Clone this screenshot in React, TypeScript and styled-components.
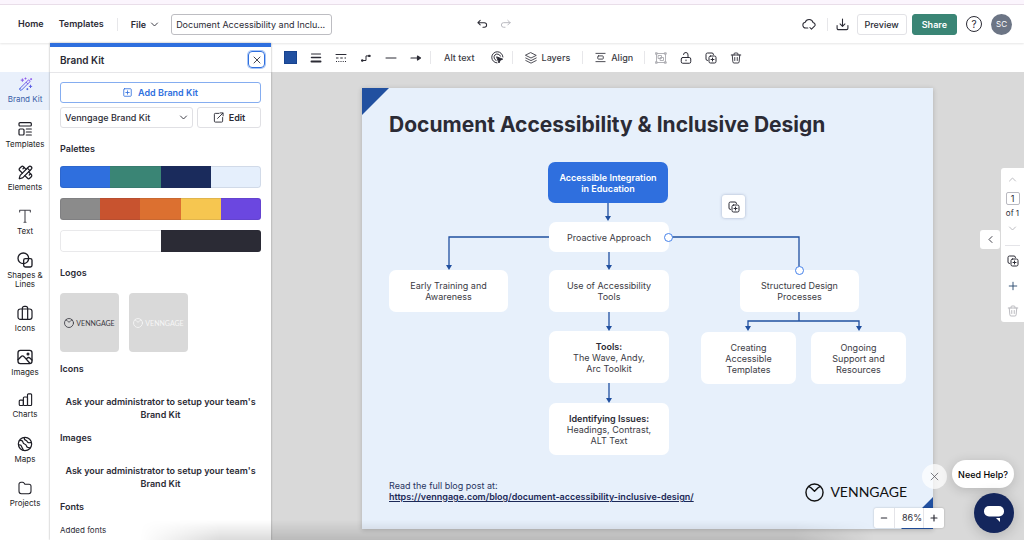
import React from "react";
import styled, { createGlobalStyle, css } from "styled-components";
import { PencilRuler } from "lucide-react";

const ink = "#2b2b35";
const blue = "#2f6fde";
const deep = "#2150a0";

const Global = createGlobalStyle`
  *, *::before, *::after { box-sizing: border-box; }
  body { margin: 0; background: #fff; color: ${ink}; font-family: Inter, "Liberation Sans", sans-serif; font-size: 9px; }
  button, input, select { font: inherit; color: inherit; margin: 0; padding: 0; }
  button { background: none; border: 0; cursor: pointer; }
  a { color: inherit; text-decoration: none; }
  h1, h2, h3, p { margin: 0; }
`;

const Shell = styled.div`
  height: 100vh;
  min-height: 540px;
  display: flex;
  flex-direction: column;
  overflow: hidden;
  position: relative;
`;

const Strip = styled.div`
  flex: none;
  height: 5px;
  background: #fbf5fd;
  border-bottom: 1px solid #eadfea;
`;

const Header = styled.header`
  flex: none;
  height: 38px;
  padding: 0 12px 0 18px;
  display: flex;
  align-items: center;
  background: #fff;
  box-shadow: 0 1px 2px rgba(0, 0, 0, 0.1);
  position: relative;
  z-index: 2;
`;

const Group = styled.div<{ $gap?: number; $start?: number; $push?: boolean }>`
  display: flex;
  align-items: center;
  gap: ${(p) => p.$gap ?? 0}px;
  margin-left: ${(p) => (p.$push ? "auto" : `${p.$start ?? 0}px`)};
`;

const NavLink = styled.a`
  font-weight: 600;
  line-height: 12px;
`;

const Rule = styled.span<{ $space?: number }>`
  width: 1px;
  height: 13px;
  background: #e7e7ea;
  margin: 0 ${(p) => p.$space ?? 0}px;
`;

const FileButton = styled.button`
  display: flex;
  align-items: center;
  gap: 4px;
  font-weight: 600;
`;

const TitleInput = styled.input`
  width: 161px;
  height: 21px;
  padding: 0 4px;
  border: 1px solid #bdbdc2;
  border-radius: 3px;
  background: #fff;
`;

const IconButton = styled.button<{ $size?: number; $tone?: string }>`
  flex: none;
  width: ${(p) => p.$size ?? 23}px;
  height: ${(p) => p.$size ?? 23}px;
  display: grid;
  place-items: center;
  color: ${(p) => p.$tone ?? ink};
`;

const TextButton = styled.button<{ $solid?: boolean }>`
  height: 21px;
  padding: 0 7px;
  font-weight: 500;
  border: 1px solid #e2e2e6;
  border-radius: 3px;
  background: #fff;
  ${(p) =>
    p.$solid &&
    css`
      padding: 0 9px;
      font-weight: 600;
      color: #fff;
      background: #3a8575;
      border-color: #3a8575;
    `}
`;

const Round = styled.button<{ $size: number; $filled?: boolean }>`
  width: ${(p) => p.$size}px;
  height: ${(p) => p.$size}px;
  border-radius: 50%;
  font-size: ${(p) => (p.$filled ? 8 : 10)}px;
  border: ${(p) => (p.$filled ? "0" : `1px solid ${ink}`)};
  background: ${(p) => (p.$filled ? "#6c7585" : "#fff")};
  color: ${(p) => (p.$filled ? "#fff" : ink)};
`;

const Body = styled.div`
  flex: 1;
  min-height: 0;
  display: grid;
  grid-template-columns: 50px 221px minmax(0, 1fr);
`;

const Rail = styled.nav`
  padding: 29px 0 27px;
  display: flex;
  flex-direction: column;
  justify-content: space-between;
`;

const RailItem = styled.a<{ $active?: boolean }>`
  min-height: 38px;
  padding: 5px 0;
  display: flex;
  flex-direction: column;
  align-items: center;
  gap: 3px;
  font-size: 8px;
  line-height: 9px;
  text-align: center;
  white-space: pre-line;
  color: ${(p) => (p.$active ? "#3a5fa8" : "#1d1d25")};
  background: ${(p) => (p.$active ? "#e9f0fb" : "transparent")};
`;

const Panel = styled.aside`
  border-top: 4px solid ${blue};
  overflow: hidden;
  position: relative;
  z-index: 3;
  background: #fff;
  box-shadow: 0 0 2px rgba(0, 0, 0, 0.35);
`;

const PanelHead = styled.div`
  height: 26px;
  padding: 0 6px 0 10px;
  display: flex;
  align-items: center;
  justify-content: space-between;
  border-bottom: 1px solid #e6e6e9;
`;

const PanelTitle = styled.h2`
  font-size: 10px;
  line-height: 14px;
  font-weight: 600;
`;

const CloseButton = styled.button`
  width: 17px;
  height: 17px;
  display: grid;
  place-items: center;
  border: 1px solid ${blue};
  border-radius: 4px;
  box-shadow: 0 0 0 1px #a9c6f6;
`;

const PanelBody = styled.div`
  padding: 9px 10px;
`;

const AddButton = styled.button`
  width: 100%;
  height: 21px;
  display: flex;
  align-items: center;
  justify-content: center;
  gap: 6px;
  color: ${blue};
  font-weight: 600;
  border: 1px solid #85adf0;
  border-radius: 3px;
`;

const KitRow = styled.div`
  display: flex;
  gap: 4px;
  margin-top: 4px;
`;

const SelectBox = styled.label`
  flex: 1;
  display: flex;
  align-items: center;
  height: 21px;
  padding-right: 4px;
  border: 1px solid #e0e0e4;
  border-radius: 3px;
`;

const KitSelect = styled.select`
  flex: 1;
  min-width: 0;
  height: 19px;
  padding-left: 4px;
  appearance: none;
  border: 0;
  background: transparent;
  font-weight: 500;
`;

const EditButton = styled.button`
  width: 64px;
  height: 21px;
  display: flex;
  align-items: center;
  justify-content: center;
  gap: 5px;
  font-weight: 600;
  border: 1px solid #e0e0e4;
  border-radius: 3px;
`;

const SectionTitle = styled.h3<{ $top: number }>`
  margin-top: ${(p) => p.$top}px;
  font-size: 9px;
  line-height: 12px;
  font-weight: 600;
`;

const Palettes = styled.div`
  margin-top: 11px;
  display: grid;
  gap: 10px;
`;

const Palette = styled.div`
  height: 22px;
  display: flex;
  border-radius: 3px;
  overflow: hidden;
  position: relative;

  &::after {
    content: "";
    position: absolute;
    inset: 0;
    border: 1px solid rgba(40, 40, 60, 0.1);
    border-radius: 3px;
  }
`;

const Swatch = styled.span<{ $color: string }>`
  flex: 1;
  background: ${(p) => p.$color};
`;

const LogoRow = styled.div`
  margin-top: 14px;
  display: flex;
  gap: 10px;
`;

const LogoCard = styled.button<{ $tone: string }>`
  width: 59px;
  height: 59px;
  display: flex;
  align-items: center;
  justify-content: center;
  gap: 2px;
  border-radius: 4px;
  background: #d9d9d9;
  color: ${(p) => p.$tone};
  font-family: Lato, sans-serif;
  font-size: 7px;
`;

const Notice = styled.p`
  margin-top: 20px;
  font-weight: 600;
  line-height: 13px;
  text-align: center;
`;

const Small = styled.p`
  margin-top: 11px;
  font-size: 8px;
  line-height: 12px;
`;

const Main = styled.main`
  min-width: 0;
  display: flex;
  flex-direction: column;
`;

const Toolbar = styled.div`
  flex: none;
  height: 29px;
  padding-left: 7px;
  display: flex;
  align-items: center;
  color: #3c3c45;
`;

const ColorChip = styled.button`
  width: 13px;
  height: 13px;
  margin: 0 6px;
  background: ${deep};
  border: 1px solid #17438f;
`;

const ToolText = styled.button`
  display: flex;
  align-items: center;
  gap: 5px;
  font-weight: 500;
`;

const Stage = styled.div`
  flex: 1;
  min-height: 0;
  padding-top: 16px;
  background: #d9d9d9;
  position: relative;
`;

const Page = styled.article`
  position: relative;
  width: 571px;
  height: 441px;
  margin: 0 auto;
  background: #e7f0fb;
  box-shadow: 0 1px 5px rgba(0, 0, 0, 0.2);
`;

const PageTitle = styled.h1`
  padding: 23px 0 0 27px;
  font-size: 21px;
  line-height: 28px;
  font-weight: 700;
  white-space: nowrap;
`;

const Drawing = styled.svg`
  position: absolute;
  inset: 0;
`;

const Node = styled.div<{ $x: number; $y: number; $w: number; $h: number; $root?: boolean }>`
  position: absolute;
  left: ${(p) => p.$x}px;
  top: ${(p) => p.$y}px;
  width: ${(p) => p.$w}px;
  height: ${(p) => p.$h}px;
  display: flex;
  flex-direction: column;
  align-items: center;
  justify-content: center;
  border-radius: 7px;
  background: ${(p) => (p.$root ? blue : "#fff")};
  color: ${(p) => (p.$root ? "#fff" : "#3b3b44")};
  font-weight: ${(p) => (p.$root ? 600 : 400)};
  line-height: 11px;
  white-space: nowrap;
`;

const Strong = styled.strong`
  font-weight: 600;
  color: ${ink};
`;

const Handle = styled.span<{ $x: number; $y: number }>`
  position: absolute;
  left: ${(p) => p.$x - 4}px;
  top: ${(p) => p.$y - 4}px;
  width: 9px;
  height: 9px;
  border: 1px solid #4682ea;
  border-radius: 50%;
  background: #fff;
`;

const FloatButton = styled.button`
  position: absolute;
  left: 360px;
  top: 107px;
  width: 23px;
  height: 23px;
  display: grid;
  place-items: center;
  border-radius: 3px;
  background: #fff;
  box-shadow: 0 0 3px rgba(40, 60, 110, 0.35);
`;

const PageFoot = styled.footer`
  position: absolute;
  left: 27px;
  right: 26px;
  bottom: 27px;
  display: flex;
  align-items: flex-end;
  justify-content: space-between;
  line-height: 11px;
  color: #27345f;
`;

const BlogLink = styled.a`
  font-weight: 600;
  text-decoration: underline;
  color: #1c2957;
`;

const Brand = styled.div`
  display: flex;
  align-items: center;
  gap: 6px;
  color: #111;
  font-family: Lato, sans-serif;
  font-size: 14px;
  line-height: 20px;
`;

const Pager = styled.div`
  position: absolute;
  top: 96px;
  right: 0;
  width: 23px;
  height: 154px;
  padding: 5px 4px;
  display: flex;
  flex-direction: column;
  align-items: center;
  border-radius: 3px 0 0 3px;
  background: #fff;
  font-size: 8px;
  line-height: 11px;
`;

const PageInput = styled.input`
  width: 14px;
  height: 14px;
  margin: 6px 0 3px;
  border: 1px solid #b9b9c0;
  border-radius: 2px;
  font-size: 9px;
  text-align: center;
`;

const PagerRule = styled.span`
  width: 15px;
  height: 1px;
  margin: 8px 0 2px;
  flex: none;
  background: #e4e4e8;
`;

const PagerTab = styled.button`
  position: absolute;
  top: 158px;
  right: 24px;
  width: 20px;
  height: 19px;
  display: grid;
  place-items: center;
  border-radius: 3px;
  background: #fff;
`;

const ZoomBar = styled.div`
  position: absolute;
  right: 80px;
  bottom: 12px;
  height: 20px;
  display: grid;
  grid-template-columns: 20px 30px 20px;
  align-items: center;
  border-radius: 2px;
  background: #fff;
  box-shadow: 0 0 2px rgba(0, 0, 0, 0.25);
  font-size: 9px;
`;

const ZoomButton = styled.button`
  height: 20px;
  display: grid;
  place-items: center;
`;

const ZoomValue = styled.output`
  height: 20px;
  padding-right: 1px;
  line-height: 20px;
  text-align: right;
  border: solid #e4e4e8;
  border-width: 0 1px;
`;

const HelpDismiss = styled.button`
  position: absolute;
  right: 77px;
  bottom: 51px;
  width: 25px;
  height: 25px;
  display: grid;
  place-items: center;
  border-radius: 50%;
  color: #55555e;
  background: rgba(255, 255, 255, 0.72);
`;

const HelpPill = styled.button`
  position: absolute;
  right: 10px;
  bottom: 52px;
  height: 28px;
  padding: 0 6px;
  border-radius: 14px;
  background: #fff;
  color: #000;
  font-weight: 500;
  box-shadow: 0 2px 12px rgba(0, 0, 0, 0.16);
`;

const ChatButton = styled.button`
  position: absolute;
  right: 10px;
  bottom: 7px;
  width: 40px;
  height: 40px;
  display: grid;
  place-items: center;
  border-radius: 50%;
  background: #14265c;
  box-shadow: 0 2px 14px rgba(0, 0, 0, 0.2);
`;

const DockShade = styled.div`
  position: absolute;
  left: 140px;
  right: 150px;
  bottom: 0;
  height: 20px;
  z-index: 5;
  pointer-events: none;
  background: linear-gradient(to bottom, rgba(0, 0, 0, 0), rgba(0, 0, 0, 0.14));
  mask-image: linear-gradient(to right, transparent, #000 80px, #000 calc(100% - 80px), transparent);
`;

type IconProps = { size?: number; width?: number; stroke?: string; children: React.ReactNode };
const Icon = ({ size = 13, width = 1.7, stroke = "currentColor", children }: IconProps) => (
  <svg
    width={size}
    height={size}
    viewBox="0 0 24 24"
    fill="none"
    stroke={stroke}
    strokeWidth={width}
    strokeLinecap="round"
    strokeLinejoin="round"
    aria-hidden="true"
  >
    {children}
  </svg>
);

const Chevron = ({ d, size = 9, width = 2.4 }: { d: string; size?: number; width?: number }) => (
  <Icon size={size} width={width}>
    <path d={d} />
  </Icon>
);
const DOWN = "M4 8l8 8 8-8";
const UP = "M4 16l8-8 8 8";
const LEFT = "M16 4l-8 8 8 8";

const Cross = ({ size = 8, width = 2.6 }: { size?: number; width?: number }) => (
  <Icon size={size} width={width}>
    <path d="M3 3l18 18M21 3L3 21" />
  </Icon>
);

const Duplicate = ({ size = 13 }: { size?: number }) => (
  <Icon size={size} width={2}>
    <rect x="8" y="8" width="14" height="14" rx="3" />
    <path d="M5 17a3 3 0 0 1-3-3V5a3 3 0 0 1 3-3h9a3 3 0 0 1 3 3M15 12v6M12 15h6" />
  </Icon>
);

const Trash = () => (
  <Icon size={12} width={1.8}>
    <path d="M2.500 6h19M8 6V4a2 2 0 0 1 2-2h4a2 2 0 0 1 2 2v2M4.500 6l1.200 13.500A2.500 2.500 0 0 0 8.200 22h7.600a2.500 2.500 0 0 0 2.500-2.500L19.500 6M9.500 11v6M14.500 11v6" />
  </Icon>
);

const VennMark = ({ size, width }: { size: number; width: number }) => (
  <Icon size={size} width={width}>
    <circle cx="12" cy="12" r="10.800" />
    <path d="M5 4.500l2.500 1.500L12 10.500 16.500 6 19 4.500" />
  </Icon>
);

const railItems: { label: string; icon: React.ReactNode }[] = [
  {
    label: "Brand Kit",
    icon: (
      <Icon size={15} stroke="url(#wand)" width={1.6}>
        <defs>
          <linearGradient id="wand" x1="0" y1="0" x2="0" y2="24" gradientUnits="userSpaceOnUse">
            <stop offset="0" stopColor="#9a58ee" />
            <stop offset="1" stopColor="#3a67e0" />
          </linearGradient>
        </defs>
        <path d="M3.200 18.200L16 5.400a1.800 1.800 0 0 1 2.600 2.600L5.800 20.800a1.800 1.800 0 0 1-2.600-2.600zM13 8.400l2.600 2.600M7 3v4M5 5h4M20 13v4M18 15h4M12 1.500v1.800M11.100 2.400h1.800M21 2.500v1.800M20.100 3.400h1.800M15 18.500v1.800M14.100 19.400h1.800" />
      </Icon>
    ),
  },
  {
    label: "Templates",
    icon: (
      <Icon size={16} width={1.8}>
        <rect x="3" y="2.500" width="18.500" height="5" rx="1.500" />
        <rect x="3" y="12" width="7.500" height="9" rx="1.500" />
        <path d="M14 12h7.500M14 16.500h7.500M14 21h7.500" />
      </Icon>
    ),
  },
  { label: "Elements", icon: <PencilRuler size={15} strokeWidth={2} aria-hidden="true" /> },
  {
    label: "Text",
    icon: (
      <Icon size={16} width={1.6} stroke="#44444c">
        <path d="M4 6V3.500h16V6M12 3.500v18M10.500 21.500h3" />
      </Icon>
    ),
  },
  {
    label: "Shapes &\nLines",
    icon: (
      <Icon size={16} width={2}>
        <circle cx="9.500" cy="9.500" r="8" />
        <rect x="10" y="10" width="12.500" height="12.500" rx="2.500" />
      </Icon>
    ),
  },
  {
    label: "Icons",
    icon: (
      <Icon size={16} width={1.8}>
        <rect x="1.500" y="6" width="21" height="15.500" rx="3.500" />
        <path d="M8 21.500V5a3 3 0 0 1 3-3h2a3 3 0 0 1 3 3v16.500" />
      </Icon>
    ),
  },
  {
    label: "Images",
    icon: (
      <Icon size={16} width={2}>
        <rect x="1.500" y="2" width="21" height="20" rx="3.500" />
        <path d="M1.500 16l4.500-4.500c1.500-1.500 3-1.500 4.500 0L19 21M14 15l1.500-1.500c1.200-1 2.500-1 3.700 0l3.300 3" />
        <circle cx="16.500" cy="7.500" r="1.300" />
      </Icon>
    ),
  },
  {
    label: "Charts",
    icon: (
      <Icon size={15} width={1.8}>
        <rect x="2" y="13" width="6.600" height="8.500" rx="1.500" />
        <rect x="8.600" y="8" width="6.600" height="13.500" rx="1.500" />
        <rect x="15.200" y="3" width="6.600" height="18.500" rx="1.500" />
      </Icon>
    ),
  },
  {
    label: "Maps",
    icon: (
      <Icon size={16} width={1.8}>
        <circle cx="12" cy="12" r="10" />
        <path d="M3.500 7c3-1 5 0 5.500 2.500s2.500 2 4 3.500 1 3 2.500 4 3 0 4 1M2.500 13.500c2.500-.5 4 .5 4.500 2.500s2 2.500 2.500 5.500M11 2.500c-.5 2.500.5 3.500 2.500 4s1.500 3 3.500 3.500 3-.5 4.500 0" />
      </Icon>
    ),
  },
  {
    label: "Projects",
    icon: (
      <Icon size={16} width={1.6}>
        <path d="M3 6.500a3 3 0 0 1 3-3h2.400a3 3 0 0 1 2.100 1L12 6.500h6a3 3 0 0 1 3 3v7.500a3.500 3.500 0 0 1-3.500 3.500h-11A3.500 3.500 0 0 1 3 17z" />
      </Icon>
    ),
  },
];

const palettes = [
  ["#2f6fde", "#3a8575", "#1a2b5c", "#e5effc"],
  ["#8b8b8b", "#c8532f", "#dc7030", "#f6c650", "#6b47e0"],
  ["#ffffff", "#2b2b35"],
];

const nodes = [
  { x: 186, y: 74, w: 120, h: 41, root: true, lines: ["Accessible Integration", "in Education"] },
  { x: 187, y: 134, w: 120, h: 30, lines: ["Proactive Approach"] },
  { x: 27, y: 182, w: 119, h: 42, lines: ["Early Training and", "Awareness"] },
  { x: 187, y: 182, w: 120, h: 42, lines: ["Use of Accessibility", "Tools"] },
  { x: 378, y: 182, w: 119, h: 42, lines: ["Structured Design", "Processes"] },
  { x: 187, y: 243, w: 120, h: 52, head: "Tools:", lines: ["The Wave, Andy,", "Arc Toolkit"] },
  { x: 187, y: 315, w: 120, h: 52, head: "Identifying Issues:", lines: ["Headings, Contrast,", "ALT Text"] },
  { x: 339, y: 244, w: 95, h: 52, lines: ["Creating", "Accessible", "Templates"] },
  { x: 449, y: 244, w: 95, h: 52, lines: ["Ongoing", "Support and", "Resources"] },
];

const arrowTips: [number, number][] = [
  [246, 133],
  [87, 182],
  [247, 182],
  [247, 243],
  [247, 315],
  [386, 243],
  [497, 243],
];

const App = () => (
  <>
    <Global />
    <Shell>
      <Strip />
      <Header>
        <Group $gap={15}>
          <NavLink href="#home">Home</NavLink>
          <NavLink href="#templates">Templates</NavLink>
        </Group>
        <Rule $space={13} />
        <FileButton>
          File
          <Chevron d={DOWN} />
        </FileButton>
        <Group $start={12}>
          <TitleInput aria-label="Document title" defaultValue="Document Accessibility and Inclu..." />
        </Group>
        <Group $start={139}>
          <IconButton aria-label="Undo">
            <Icon size={11} width={2.2}>
              <path d="M7 3L2 8l5 5M2 8h14a5 5 0 0 1 0 10h-3" />
            </Icon>
          </IconButton>
          <IconButton aria-label="Redo" $tone="#b4b4ba">
            <Icon size={11} width={2}>
              <path d="M17 3l5 5-5 5M22 8H8a5 5 0 0 0 0 10h3" />
            </Icon>
          </IconButton>
        </Group>
        <Group $push>
          <IconButton aria-label="Saved to cloud">
            <Icon size={14} width={1.8}>
              <path d="M10 19H6.500a5 5 0 0 1-1-9.900A7 7 0 0 1 19 9.500a4.500 4.500 0 0 1 3.500 5M13.500 18l2.700 2.700 5.300-5.200" />
            </Icon>
          </IconButton>
          <Rule $space={6} />
          <IconButton aria-label="Download" $size={18}>
            <Icon size={13} width={2}>
              <path d="M12 2v13M7.500 11l4.500 4.500 4.500-4.500M2 14v5a2.500 2.500 0 0 0 2.500 2.500h15A2.500 2.500 0 0 0 22 19v-5" />
            </Icon>
          </IconButton>
          <Group $gap={5} $start={5}>
            <TextButton>Preview</TextButton>
            <TextButton $solid>Share</TextButton>
          </Group>
          <Group $gap={9} $start={9}>
            <Round $size={16} aria-label="Help">
              ?
            </Round>
            <Round $size={21} $filled>
              SC
            </Round>
          </Group>
        </Group>
      </Header>
      <Body>
        <Rail>
          {railItems.map((item, i) => (
            <RailItem key={item.label} href="#" $active={i === 0}>
              {item.icon}
              {item.label}
            </RailItem>
          ))}
        </Rail>
        <Panel>
          <PanelHead>
            <PanelTitle>Brand Kit</PanelTitle>
            <CloseButton aria-label="Close panel">
              <Cross />
            </CloseButton>
          </PanelHead>
          <PanelBody>
            <AddButton>
              <Icon size={9} width={2.2}>
                <rect x="2" y="2" width="20" height="20" rx="2" />
                <path d="M12 7.500v9M7.500 12h9" />
              </Icon>
              Add Brand Kit
            </AddButton>
            <KitRow>
              <SelectBox>
                <KitSelect aria-label="Brand kit">
                  <option>Venngage Brand Kit</option>
                </KitSelect>
                <Chevron d={DOWN} />
              </SelectBox>
              <EditButton>
                <Icon size={11} width={2}>
                  <path d="M13 3H5a2 2 0 0 0-2 2v15a2 2 0 0 0 2 2h14a2 2 0 0 0 2-2v-8M10 14L21.500 2.500M15.500 2h6.500v6.500" />
                </Icon>
                Edit
              </EditButton>
            </KitRow>
            <SectionTitle $top={15}>Palettes</SectionTitle>
            <Palettes>
              {palettes.map((colors) => (
                <Palette key={colors[0]}>
                  {colors.map((c) => (
                    <Swatch key={c} $color={c} />
                  ))}
                </Palette>
              ))}
            </Palettes>
            <SectionTitle $top={15}>Logos</SectionTitle>
            <LogoRow>
              <LogoCard $tone="#3a3a42">
                <VennMark size={10} width={2} />
                VENNGAGE
              </LogoCard>
              <LogoCard $tone="#f6f6f6">
                <VennMark size={10} width={2} />
                VENNGAGE
              </LogoCard>
            </LogoRow>
            <SectionTitle $top={11}>Icons</SectionTitle>
            <Notice>
              Ask your administrator to setup your team's
              <br />
              Brand Kit
            </Notice>
            <SectionTitle $top={11}>Images</SectionTitle>
            <Notice>
              Ask your administrator to setup your team's
              <br />
              Brand Kit
            </Notice>
            <SectionTitle $top={11}>Fonts</SectionTitle>
            <Small>Added fonts</Small>
          </PanelBody>
        </Panel>
        <Main>
          <Toolbar>
            <ColorChip aria-label="Line colour" />
            <IconButton $size={25} aria-label="Line weight">
              <Icon size={12} width={1}>
                <path strokeWidth="2" d="M3 4h18" />
                <path strokeWidth="3" d="M3 11h18" />
                <path strokeWidth="4" d="M3 19h18" />
              </Icon>
            </IconButton>
            <IconButton $size={25} aria-label="Line style">
              <Icon size={12} width={2}>
                <path d="M2 5h20" />
                <path strokeDasharray="5 3.500" strokeLinecap="butt" d="M2 12h20" />
                <path strokeDasharray="2 2.500" strokeLinecap="butt" d="M2 19h20" />
              </Icon>
            </IconButton>
            <IconButton $size={25} aria-label="Line shape">
              <Icon size={10} width={2.4}>
                <path d="M4 18h8V7h8" />
                <path fill="currentColor" d="M2 16.500h3v3H2zM19 5.500h3v3h-3z" />
              </Icon>
            </IconButton>
            <IconButton $size={25} aria-label="Line start">
              <Icon size={12} width={2}>
                <path d="M2 12h20" />
              </Icon>
            </IconButton>
            <IconButton $size={25} aria-label="Line end">
              <Icon size={12} width={2.4}>
                <path d="M2 12h13" />
                <path fill="currentColor" d="M15 8l6 4-6 4z" />
              </Icon>
            </IconButton>
            <Group $start={2}>
              <Rule />
            </Group>
            <Group $start={13} $gap={10}>
              <ToolText>Alt text</ToolText>
              <IconButton $size={25} aria-label="Interactivity">
                <Icon size={13} width={1.8}>
                  <path d="M11 22A10.300 10.300 0 1 1 22 11M9.500 17.500A6.200 6.200 0 1 1 17.500 9.500" />
                  <path fill="currentColor" d="M11 11l10.500 4-4.500 2-2 4.500z" />
                </Icon>
              </IconButton>
            </Group>
            <Rule $space={2} />
            <Group $start={10}>
              <ToolText>
                <Icon size={12} width={1.8}>
                  <path d="M12 1.500l10.500 5.300L12 12 1.500 6.800zM1.500 12L12 17.200 22.500 12M1.500 17L12 22.300 22.500 17" />
                </Icon>
                Layers
              </ToolText>
            </Group>
            <Rule $space={12} />
            <ToolText>
              <Icon size={11} width={2}>
                <path d="M2 3h20M2 21h20" />
                <rect x="6" y="8.500" width="12" height="7" rx="1.500" />
              </Icon>
              Align
            </ToolText>
            <Group $start={8}>
              <Rule $space={3} />
              <IconButton $size={25} $tone="#a9a9af" aria-label="Group">
                <Icon size={12} width={1.8}>
                  <path d="M4 3h16M4 21h16M3 4v16M21 4v16M1.500 1.500h3v3h-3zM19.500 1.500h3v3h-3zM1.500 19.500h3v3h-3zM19.500 19.500h3v3h-3z" />
                  <path d="M7 7h6v6H7zM11 11h6v6h-6z" />
                </Icon>
              </IconButton>
              <IconButton $size={25} aria-label="Lock">
                <Icon size={12} width={2}>
                  <rect x="2.500" y="11" width="19" height="11.500" rx="3" />
                  <path d="M16 11V6a4.500 4.500 0 0 0-9-1M12 16v1.500" />
                </Icon>
              </IconButton>
              <IconButton $size={25} aria-label="Duplicate">
                <Duplicate size={12} />
              </IconButton>
              <IconButton $size={25} aria-label="Delete">
                <Trash />
              </IconButton>
            </Group>
          </Toolbar>
          <Stage>
            <Page>
              <Drawing width="571" height="441" aria-hidden="true">
                <path fill={deep} d="M0 0h27L0 27zM571 409v32h-32z" />
                <g fill="none" stroke={deep} strokeWidth="1.300">
                  <path d="M246 115v15M187 149H87v30M247 164v15M307 149h130v30M247 224v15M247 295v16M437 224v9M386 240v-7h111v7" />
                </g>
                {arrowTips.map(([x, y]) => (
                  <path key={`${x}-${y}`} fill={deep} d={`M${x - 3} ${y - 5}h6l-3 5z`} />
                ))}
              </Drawing>
              <PageTitle>Document Accessibility &amp; Inclusive Design</PageTitle>
              {nodes.map((n) => (
                <Node key={n.lines[0]} $x={n.x} $y={n.y} $w={n.w} $h={n.h} $root={n.root}>
                  {n.head && <Strong>{n.head}</Strong>}
                  {n.lines.map((l) => (
                    <span key={l}>{l}</span>
                  ))}
                </Node>
              ))}
              <Handle $x={306} $y={149} />
              <Handle $x={437} $y={182} />
              <FloatButton aria-label="Duplicate connector">
                <Duplicate size={12} />
              </FloatButton>
              <PageFoot>
                <div>
                  <p>Read the full blog post at:</p>
                  <BlogLink href="https://venngage.com/blog/document-accessibility-inclusive-design/">
                    https://venngage.com/blog/document-accessibility-inclusive-design/
                  </BlogLink>
                </div>
                <Brand>
                  <VennMark size={19} width={1.8} />
                  VENNGAGE
                </Brand>
              </PageFoot>
            </Page>
            <PagerTab aria-label="Collapse">
              <Chevron d={LEFT} />
            </PagerTab>
            <Pager>
              <IconButton $size={13} $tone="#b4b4ba" aria-label="Previous page">
                <Chevron d={UP} />
              </IconButton>
              <PageInput aria-label="Page" defaultValue="1" />
              of 1
              <IconButton $size={18} $tone="#b4b4ba" aria-label="Next page">
                <Chevron d={DOWN} />
              </IconButton>
              <PagerRule />
              <IconButton $size={25} aria-label="Duplicate page">
                <Duplicate size={12} />
              </IconButton>
              <IconButton $size={25} $tone="#27496d" aria-label="Add page">
                <Icon size={10} width={2.2}>
                  <path d="M12 3v18M3 12h18" />
                </Icon>
              </IconButton>
              <IconButton $size={25} $tone="#b4b4ba" aria-label="Delete page">
                <Trash />
              </IconButton>
            </Pager>
            <ZoomBar>
              <ZoomButton aria-label="Zoom out">
                <Icon size={8} width={3.500}>
                  <path d="M4 12h16" />
                </Icon>
              </ZoomButton>
              <ZoomValue>86%</ZoomValue>
              <ZoomButton aria-label="Zoom in">
                <Icon size={8} width={3.500}>
                  <path d="M12 3v18M3 12h18" />
                </Icon>
              </ZoomButton>
            </ZoomBar>
            <HelpDismiss aria-label="Dismiss help">
              <Cross size={9} width={2} />
            </HelpDismiss>
            <HelpPill>Need Help?</HelpPill>
            <ChatButton aria-label="Open chat">
              <svg width="20" height="17" viewBox="0 0 20 17" aria-hidden="true">
                <rect x="0" y="1" width="20" height="10.500" rx="5" fill="#fff" />
                <path d="M12 13h4v4z" fill="#fff" />
              </svg>
            </ChatButton>
          </Stage>
        </Main>
      </Body>
      <DockShade />
    </Shell>
  </>
);

export default App;
